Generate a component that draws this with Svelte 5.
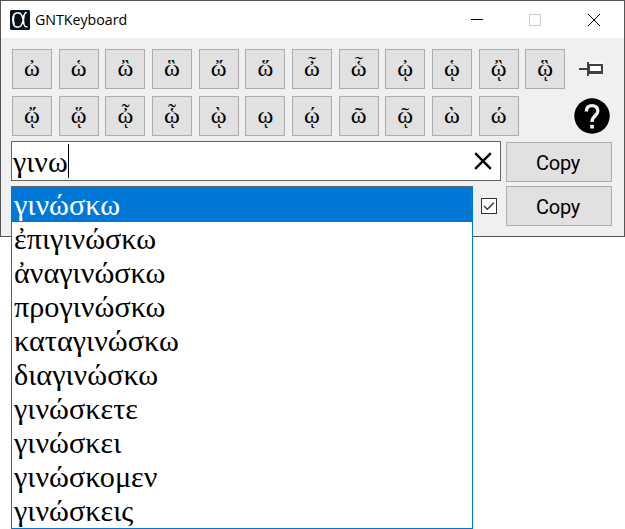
<script>
  const rows = [
    ['ὠ', 'ὡ', 'ὢ', 'ὣ', 'ὤ', 'ὥ', 'ὦ', 'ὧ', 'ᾠ', 'ᾡ', 'ᾢ', 'ᾣ'],
    ['ᾤ', 'ᾥ', 'ᾦ', 'ᾧ', 'ῲ', 'ῳ', 'ῴ', 'ῶ', 'ῷ', 'ὼ', 'ώ'],
  ];
  const words = ['γινώσκω', 'ἐπιγινώσκω', 'ἀναγινώσκω', 'προγινώσκω', 'καταγινώσκω', 'διαγινώσκω', 'γινώσκετε', 'γινώσκει', 'γινώσκομεν', 'γινώσκεις'];
  let selected = $state(0);
</script>

<div class="desktop">
<div class="window">
  <header>
    <svg class="logo" width="20" height="20" viewBox="0 0 20 20">
      <rect width="20" height="20" rx="1.5" fill="#04141f" />
      <path d="M16.8 2.6C14.4 2.2 14.1 5 13.4 9.2C12.5 14.3 11 17.2 7.8 17.2C4.6 17.2 2.7 14.2 2.7 10C2.7 5.6 4.6 2.7 8 2.7C11.4 2.7 12.6 6.4 13.2 10.2C13.9 14.6 14.4 17.8 17.6 16.6" fill="none" stroke="#fff" stroke-width="1.4" />
      <path d="M4 5.5C3.2 8.5 3.3 12 4.4 14.8M13.6 5V14" fill="none" stroke="#fff" stroke-width="1.3" />
    </svg>
    <span class="title">GNTKeyboard</span>
    <svg class="controls" width="126" height="12" viewBox="0 0 126 12" shape-rendering="crispEdges">
      <path d="M0 5.5H12" stroke="#000" />
      <rect x="58.5" y=".5" width="11" height="11" fill="none" stroke="#ccc" />
      <path d="M117.3.3L128.7 11.7M128.7.3L117.3 11.7" stroke="#000" />
    </svg>
  </header>
  <main>
    <div class="row">
      {#each rows[0] as k}<button class="key">{k}</button>{/each}
      <svg class="pin" width="26" height="16" viewBox="0 0 26 16">
        <path d="M0 5H7V0H25V15H7V10H0z" fill="#f6f6f6" />
        <path d="M0 7h8V1h2v2h14v10H10v2H8V9H0z" fill="#404040" />
        <rect x="11" y="5" width="11" height="5" fill="#fff" />
      </svg>
    </div>
    <div class="row second">
      {#each rows[1] as k}<button class="key">{k}</button>{/each}
      <svg class="help" width="36" height="36" viewBox="0 0 36 36">
        <circle cx="18" cy="18" r="17.7" />
        <path d="M12.3 13.4C12.3 9.4 14.6 7.6 18 7.6C21.5 7.6 23.8 9.8 23.8 12.9C23.8 17.8 18 18 18 24" fill="none" stroke="#f0f0f0" stroke-width="3.4" />
        <rect x="16.2" y="26.8" width="3.7" height="3.7" fill="#f0f0f0" />
      </svg>
    </div>
    <div class="line">
      <div class="field">
        <span>γινω</span><i class="caret"></i>
        <svg width="18" height="18" viewBox="0 0 18 18"><path d="M1.2 1.2L16.8 16.8M16.8 1.2L1.2 16.8" stroke="#000" stroke-width="2.4" /></svg>
      </div>
      <button class="copy first">Copy</button>
    </div>
    <div class="line lower">
      <svg class="check" width="16" height="16" viewBox="0 0 16 16">
        <rect x=".5" y=".5" width="15" height="15" fill="#fff" stroke="#333" />
        <path d="M3 8L6.3 11.3L13 4.7" fill="none" stroke="#333" stroke-width="1.3" />
      </svg>
      <button class="copy">Copy</button>
    </div>
  </main>
  <ul>
    {#each words as w, i}
      <li class:active={i === selected}><button onclick={() => (selected = i)}>{w}</button></li>
    {/each}
  </ul>
</div>
</div>

<style>
  :global(body) { background: #fff; }
  * { box-sizing: border-box; }
  button { margin: 0; padding: 0; color: #000; }
  .desktop { height: 529px; }
  .window { position: relative; width: 625px; height: 237px; border: 1px solid #555; background: #f0f0f0; }
  header { height: 37px; background: #fff; display: flex; align-items: center; padding-left: 9px; }
  .title { font: 14.2px/20px "Open Sans", sans-serif; margin-left: 5px; flex: 1; }
  .controls { margin-right: 27px; overflow: visible; }
  .row { display: flex; align-items: center; gap: 6.66px; padding-left: 11px; margin-top: 11px; height: 40px; }
  .second { margin-top: 7px; }
  .key { flex: none; width: 40px; height: 40px; border: 1px solid #adadad; background: #e1e1e1; font: 24px/36px "Liberation Serif", serif; padding-bottom: 2px; }
  .pin { margin-left: 7px; }
  .help { margin: 0 14px 0 auto; }
  .line { display: flex; align-items: center; gap: 5px; margin-top: 5px; padding: 0 12px 0 10px; height: 40px; }
  .lower { justify-content: flex-end; gap: 9px; }
  .field { display: flex; align-items: center; width: 490px; height: 40px; border: 1px solid #646464; background: #fff; padding: 0 8px 0 1px; font: 30px/38px "Liberation Serif", serif; }
  .field span { padding-top: 1px; }
  .field svg { margin-left: auto; }
  .caret { width: 1px; height: 34px; background: #000; }
  .copy { width: 106px; height: 40px; border: 1px solid #adadad; background: #e1e1e1; font: 20px/36px Roboto, sans-serif; padding: 1px 2px 0 0; letter-spacing: -.2px; }
  .first { margin-top: 2px; }
  ul { position: absolute; left: 10px; top: 185px; width: 462px; height: 343px; margin: 0; padding: 1px 0 0; list-style: none; background: #fff; border: 1px solid #0078d7; border-top-color: #646464; }
  li { height: 34px; }
  li button { display: block; width: 100%; height: 34px; border: 0; background: none; text-align: left; padding: 1px 0 0 2px; font: 30.2px/33px "Liberation Serif", serif; }
  .active { background: #0078d7; box-shadow: 0 -1px #0078d7; }
  .active button { color: #fff; }
</style>
